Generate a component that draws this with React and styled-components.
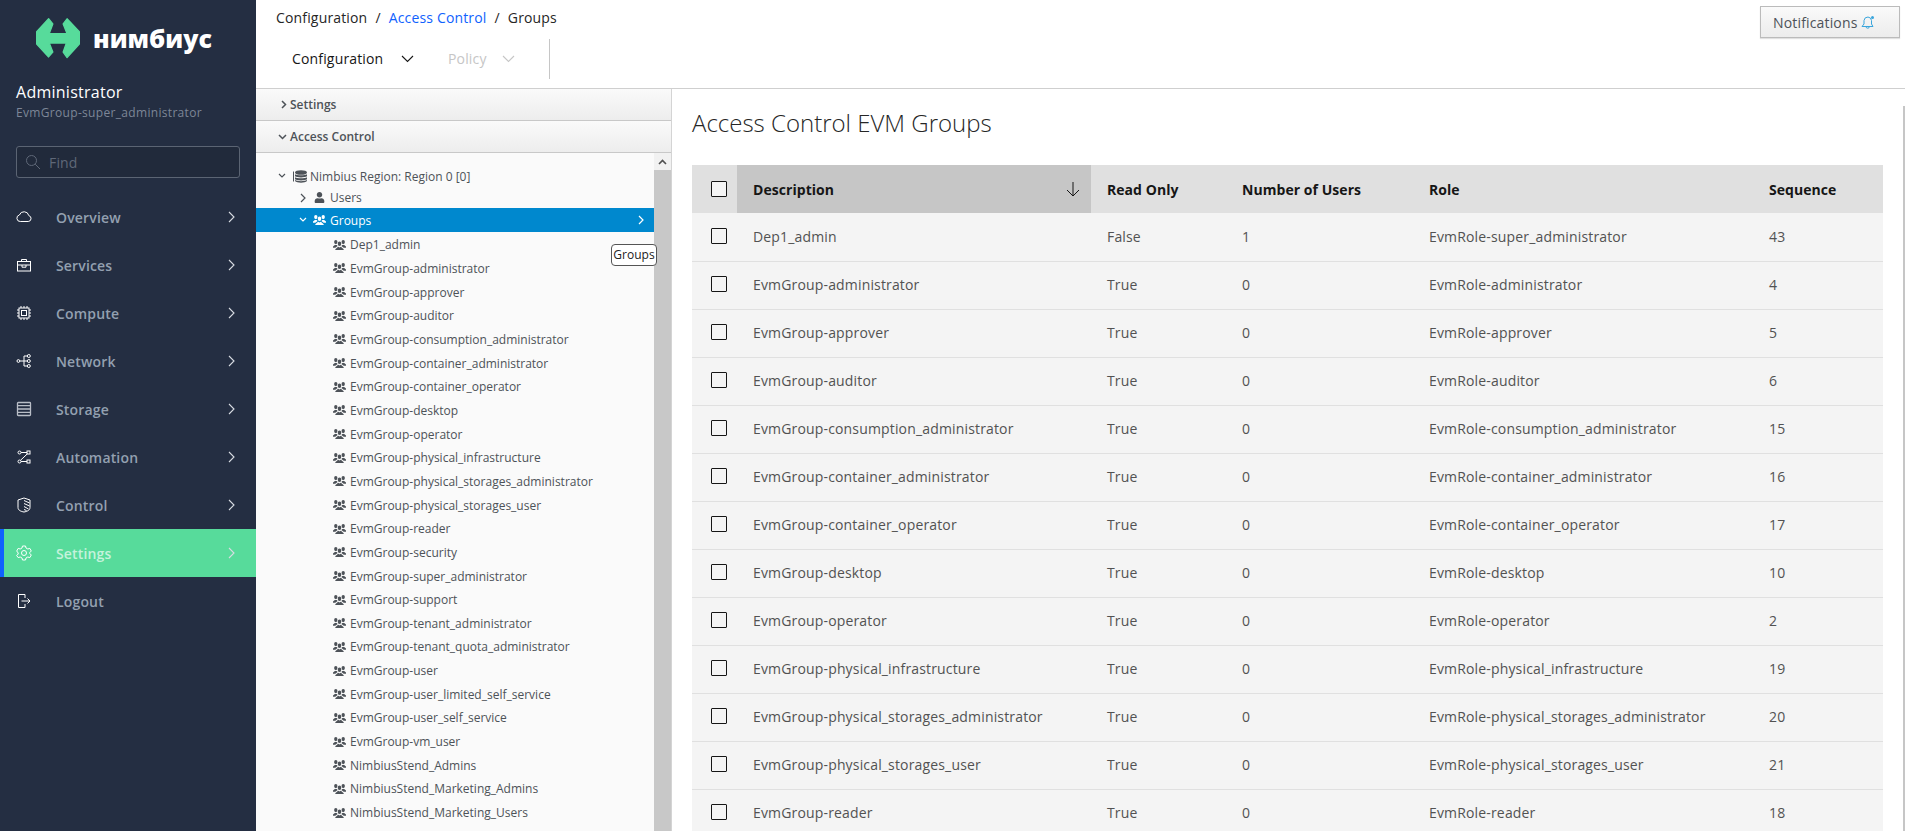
import React from 'react';
import styled, { createGlobalStyle } from 'styled-components';
import { FaUser } from 'react-icons/fa';

const Global = createGlobalStyle`
  html, body { margin: 0; padding: 0; height: 100%; overflow: hidden; background: #fff; }
  body { font-family: "Open Sans", "Noto Sans", sans-serif; color: #161616; }
  * { box-sizing: border-box; }
`;

const Page = styled.div`display: flex; height: 100vh; overflow: hidden;`;

const Sidebar = styled.aside`
  width: 256px; flex: none; background: #242e42; color: #fff; display: flex; flex-direction: column;
`;
const Brand = styled.div`
  height: 76px; padding: 18px 0 0 36px; display: flex; align-items: flex-start; gap: 13px;
`;
const BrandName = styled.span`
  font-size: 25px; font-weight: 800; line-height: 40px; color: #fff;
`;
const UserName = styled.div`
  margin: 5px 0 0 16px; font-size: 16px; line-height: 23px; color: #fff; letter-spacing: .26px;
`;
const UserRole = styled.div`
  margin: 0 0 0 16px; font-size: 12px; line-height: 18px; color: #7d8697; letter-spacing: .32px;
`;
const Search = styled.div`
  margin: 24px 16px 0; height: 32px; border: 1px solid #5b6473; border-radius: 3px; background: #212a3b;
  display: flex; align-items: center; padding-left: 8px; gap: 8px; color: #5f6878; font-size: 14px; letter-spacing: .16px;
`;
const Nav = styled.nav`margin-top: 15px; display: flex; flex-direction: column;`;
const NavItem = styled.div`
  height: 48px; display: flex; align-items: center;
  background: ${p => (p.$active ? '#57db9b' : 'transparent')};
  border-left: ${p => (p.$active ? '4px solid #0f62fe' : 'none')};
  padding-left: ${p => (p.$active ? '12px' : '16px')};
  color: ${p => (p.$active ? '#c5f2dc' : '#93a0b0')};
  font-size: 14px; font-weight: 600; letter-spacing: .16px;
`;
const NavIcon = styled.svg`width: 16px; height: 16px; flex: none; color: #fff; fill: none; stroke: currentColor; stroke-width: 1;`;
const NavLabel = styled.span`margin-left: 24px; flex: 1;`;
const NavArrow = styled.svg`width: 8px; height: 12px; margin-right: 20px; fill: none; stroke: #d8dce2; stroke-width: 1.1;`;

const Main = styled.div`flex: 1; min-width: 0; display: flex; flex-direction: column;`;
const Header = styled.header`
  height: 89px; flex: none; border-bottom: 1px solid #cfcfcf; display: flex; justify-content: space-between; padding: 0 5px 0 0;
`;
const HeaderLeft = styled.div`display: flex; flex-direction: column;`;
const Crumbs = styled.div`
  margin: 8px 0 0 20px; font-size: 14px; line-height: 20px; display: flex; gap: 8px; color: #262626; letter-spacing: .16px;
`;
const CrumbLink = styled.span`color: #0f62fe;`;
const Toolbar = styled.div`
  margin: 10px 0 0 36px; height: 41px; display: flex; align-items: center;
`;
const ToolButton = styled.div`
  display: flex; align-items: center; font-size: 14px; letter-spacing: .16px;
  color: ${p => (p.$disabled ? '#c6c6c6' : '#161616')};
  gap: ${p => (p.$disabled ? '15px' : '18px')};
  width: ${p => (p.$disabled ? '101px' : '156px')};
`;
const Chevron = styled.svg`width: 13px; height: 8px; fill: none; stroke: currentColor; stroke-width: 1.1;`;
const ToolDivider = styled.div`width: 1px; height: 40px; background: #c6c6c6;`;
const NotifyButton = styled.button`
  margin-top: 6px; width: 140px; height: 32px; border: 1px solid #bbb; background: linear-gradient(#fafafa, #ececec);
  font: 14px "Open Sans", sans-serif; letter-spacing: .16px; color: #4d5258; display: flex; align-items: center; gap: 2px; padding: 0 0 0 12px;
  box-shadow: 0 1px 1px rgba(0,0,0,.12);
`;

const Body = styled.div`flex: 1; min-height: 0; display: flex;`;
const TreePanel = styled.div`
  width: 416px; flex: none; border-right: 1px solid #d4d4d4; display: flex; flex-direction: column; background: #fafafa; overflow: hidden;
`;
const Accordion = styled.div`
  height: 32px; flex: none; display: flex; align-items: center; padding-left: ${p => (p.$open ? '22px' : '25px')}; gap: 3px;
  background: linear-gradient(#fafafa, #ededed); border-bottom: 1px solid #c8c8c8;
  font-size: 12px; font-weight: 600; color: #4d5258;
`;
const TreeWrap = styled.div`flex: 1; min-height: 0; display: flex;`;
const Tree = styled.div`flex: 1; padding-top: 12px; font-size: 12px; color: #4d5258;`;
const TreeRow = styled.div`
  height: ${p => p.$h || 23.67}px; display: flex; align-items: center; padding-left: ${p => p.$pad}px; white-space: nowrap;
  background: ${p => (p.$selected ? '#0088ce' : 'transparent')};
  color: ${p => (p.$selected ? '#fff' : '#4d5258')};
  svg { flex: none; }
`;
const GroupList = styled.div`padding-top: 1px;`;
const DownChevron = styled.svg`width: 8px; height: 6px; fill: none; stroke: currentColor; stroke-width: 1.2; margin-right: ${p => p.$gap}px;`;
const RightChevron = styled.svg`width: 6px; height: 10px; fill: none; stroke: currentColor; stroke-width: 1.2; margin-right: 8px;`;
const TreeLabel = styled.span`margin-left: ${p => p.$gap}px; flex: 1;`;
const SelArrow = styled.svg`width: 6px; height: 10px; fill: none; stroke: #fff; stroke-width: 1.2; margin-right: 10px;`;
const TreeScroll = styled.div`width: 17px; flex: none; background: #c8c8c8; display: flex; flex-direction: column;`;
const ScrollTop = styled.div`height: 17px; background: #f1f1f1; display: flex; align-items: center; justify-content: center;`;
const TipWrap = styled.div`position: relative;`;
const Tip = styled.div`
  position: absolute; left: 355px; top: 91px; height: 22px; width: 46px; border: 1px solid #555; border-radius: 4px; background: #fff;
  font-size: 12px; line-height: 20px; text-align: center; color: #222; z-index: 2;
`;

const Content = styled.main`flex: 1; min-width: 0; padding: 18px 22px 0 20px; position: relative; overflow: hidden;`;
const Title = styled.h1`margin: 0 0 26px; font-size: 24px; font-weight: 300; line-height: 32px; color: #262626;`;
const Table = styled.table`width: 1191px; border-collapse: collapse; table-layout: fixed; font-size: 14px; letter-spacing: .16px;`;
const HeadCell = styled.th`
  height: 48px; background: ${p => (p.$sorted ? '#c6c6c6' : '#e0e0e0')}; text-align: left; padding: 0 ${p => (p.$sorted ? '10px' : '16px')} 0 16px;
  font-weight: 700; color: #161616; white-space: nowrap; letter-spacing: .05px;
`;
const HeadInner = styled.div`display: flex; justify-content: space-between; align-items: center;`;
const CheckCell = styled.td`height: 48px; background: #f4f4f4; padding: 0 0 2px 19px; border-bottom: 1px solid #e0e0e0;`;
const CheckHead = styled.th`height: 48px; background: #e0e0e0; padding: 0 0 0 19px;`;
const CheckBox = styled.div`width: 16px; height: 16px; border: 1px solid #161616; border-radius: 1px; background: #f4f4f4;`;
const Cell = styled.td`
  height: 48px; background: #f4f4f4; padding: 0 16px 2px; border-bottom: 1px solid #e0e0e0; color: #525252; white-space: nowrap;
  tr:first-child > & { padding-bottom: 0; }
`;
const PageScroll = styled.div`position: absolute; right: 0; top: 17px; bottom: 0; width: 2px; background: #c6c6c6;`;

const arrow = <path d="M1 1l5 5-5 5" />;
const icons = {
  Overview: <path d="M4.300 12.500h7.900a3 3 0 0 0 .6-5.900A4.900 4.900 0 0 0 3.400 6 3.300 3.300 0 0 0 4.300 12.500z" />,
  Services: <><rect x="1.500" y="4.500" width="13" height="9.500" /><path d="M5.500 4.500V2.500h5v2M1.500 8h13M6 8v2.200h4V8" /></>,
  Compute: <><rect x="3" y="3" width="10" height="10" /><rect x="5.500" y="5.500" width="5" height="5" /><path d="M5 1v2M8 1v2M11 1v2M5 13v2M8 13v2M11 13v2M1 5h2M1 8h2M1 11h2M13 5h2M13 8h2M13 11h2" /></>,
  Network: <><circle cx="2.400" cy="8" r="1.400" /><circle cx="12.800" cy="3" r="1.500" /><circle cx="12.800" cy="8" r="1.500" /><circle cx="12.800" cy="13" r="1.500" /><path d="M4 8h7.300M8 3h3.300M8 13h3.300M8 3v10" /></>,
  Storage: <g stroke="#b9bec7" strokeWidth="1.300"><rect x="1.500" y="1.500" width="13" height="13" rx=".8" /><path d="M1.500 4.700h13M1.500 8h13M1.500 11.300h13" /></g>,
  Automation: <><circle cx="3.500" cy="3.500" r="1.500" /><rect x="11" y="2" width="3" height="3" /><circle cx="3.500" cy="12.500" r="1.500" /><rect x="11" y="11" width="3" height="3" /><path d="M5 3.500H11M5 12.500H11M4.500 11.300 11.500 4.700" /></>,
  Control: <><path d="M8 1 14 3v7.500c0 2.800-3 4-6 4.500-3-.5-6-1.700-6-4.500V3z" /><path d="M8 3.500 13.500 6M8 6.500l5.500 2.500M8 9.500l4.500 2.500M8 12.500l2.500 1" /></>,
  Settings: <><circle cx="8" cy="8" r="2.500" /><path d="M6.500 1h3l.5 2 1.800 1 2-.6 1.500 2.600-1.500 1.500v1l1.500 1.500-1.500 2.600-2-.6-1.800 1-.5 2h-3l-.5-2-1.800-1-2 .6L.7 10.500 2.200 9V8L.7 6 2.200 3.400l2 .6 1.800-1z" /></>,
  Logout: <><path d="M9 5V1.500H2.500v13H9V11" /><path d="M5.500 8h8.500M11.500 5.500 14 8l-2.500 2.500" /></>,
};
const navItems = ['Overview', 'Services', 'Compute', 'Network', 'Storage', 'Automation', 'Control', 'Settings', 'Logout'];

const Logo = () => (
  <svg width="44" height="41" viewBox="16 20 136 126" style={{ flex: 'none' }}>
    <path fill="#57db9b" stroke="#57db9b" strokeWidth="4" strokeLinejoin="round"
      d="M55 22 68 38 57 68H112L100 38 112 22 150 62V100L112 142 100 125 110 97H57L68 125 55 140 18 100V62z" />
  </svg>
);

const GroupIcon = () => (
  <svg width="13" height="12" viewBox="0 0 14 12" fill="currentColor">
    <ellipse cx="3" cy="2.800" rx="1.800" ry="2.300" />
    <ellipse cx="11" cy="2.800" rx="1.800" ry="2.300" />
    <path d="M0 9V7.600L2 6h2l1 1.200L2.500 9zM14 9V7.600L12 6h-2L9 7.200 11.500 9z" />
    <ellipse cx="7" cy="4.600" rx="1.900" ry="2.500" />
    <path d="M2.500 11.500v-1L5.500 8 7 8.800 8.500 8l3 2.500v1z" />
  </svg>
);

const groups = ['Dep1_admin','EvmGroup-administrator','EvmGroup-approver','EvmGroup-auditor','EvmGroup-consumption_administrator','EvmGroup-container_administrator','EvmGroup-container_operator','EvmGroup-desktop','EvmGroup-operator','EvmGroup-physical_infrastructure','EvmGroup-physical_storages_administrator','EvmGroup-physical_storages_user','EvmGroup-reader','EvmGroup-security','EvmGroup-super_administrator','EvmGroup-support','EvmGroup-tenant_administrator','EvmGroup-tenant_quota_administrator','EvmGroup-user','EvmGroup-user_limited_self_service','EvmGroup-user_self_service','EvmGroup-vm_user','NimbiusStend_Admins','NimbiusStend_Marketing_Admins','NimbiusStend_Marketing_Users'];

const rows = [
  ['Dep1_admin','False','1','EvmRole-super_administrator','43'],
  ['EvmGroup-administrator','True','0','EvmRole-administrator','4'],
  ['EvmGroup-approver','True','0','EvmRole-approver','5'],
  ['EvmGroup-auditor','True','0','EvmRole-auditor','6'],
  ['EvmGroup-consumption_administrator','True','0','EvmRole-consumption_administrator','15'],
  ['EvmGroup-container_administrator','True','0','EvmRole-container_administrator','16'],
  ['EvmGroup-container_operator','True','0','EvmRole-container_operator','17'],
  ['EvmGroup-desktop','True','0','EvmRole-desktop','10'],
  ['EvmGroup-operator','True','0','EvmRole-operator','2'],
  ['EvmGroup-physical_infrastructure','True','0','EvmRole-physical_infrastructure','19'],
  ['EvmGroup-physical_storages_administrator','True','0','EvmRole-physical_storages_administrator','20'],
  ['EvmGroup-physical_storages_user','True','0','EvmRole-physical_storages_user','21'],
  ['EvmGroup-reader','True','0','EvmRole-reader','18'],
];

export default function App() {
  return (
    <Page>
      <Global />
      <Sidebar>
        <Brand><Logo /><BrandName>нимбиус</BrandName></Brand>
        <UserName>Administrator</UserName>
        <UserRole>EvmGroup-super_administrator</UserRole>
        <Search>
          <svg width="16" height="16" viewBox="0 0 16 16" fill="none" stroke="#5f6878"><circle cx="6.500" cy="6.500" r="5" /><path d="M10.200 10.200 15 15" /></svg>
          Find
        </Search>
        <Nav>
          {navItems.map(n => (
            <NavItem key={n} $active={n === 'Settings'}>
              <NavIcon viewBox="0 0 16 16">{icons[n]}</NavIcon>
              <NavLabel>{n}</NavLabel>
              {n !== 'Logout' && <NavArrow viewBox="0 0 8 12">{arrow}</NavArrow>}
            </NavItem>
          ))}
        </Nav>
      </Sidebar>
      <Main>
        <Header>
          <HeaderLeft>
            <Crumbs><span>Configuration</span><span>/</span><CrumbLink>Access Control</CrumbLink><span>/</span><span>Groups</span></Crumbs>
            <Toolbar>
              <ToolButton>Configuration<Chevron viewBox="0 0 13 8"><path d="M1 1l5.500 5.500L12 1" /></Chevron></ToolButton>
              <ToolButton $disabled>Policy<Chevron viewBox="0 0 13 8"><path d="M1 1l5.500 5.500L12 1" /></Chevron></ToolButton>
              <ToolDivider />
            </Toolbar>
          </HeaderLeft>
          <NotifyButton>Notifications
            <svg width="16" height="16" viewBox="0 0 16 16" fill="none" stroke="#39a5dc"><path d="M2 12.500h11L11.500 10V6.500A4 4 0 0 0 8 3a4 4 0 0 0-4 3.500V10zM6 12.500a1.700 1.700 0 0 0 3.400 0" /><circle cx="12.500" cy="3.500" r="1.500" fill="#39a5dc" stroke="none" /></svg>
          </NotifyButton>
        </Header>
        <Body>
          <TreePanel>
            <Accordion><svg width="6" height="9" viewBox="0 0 6 9" fill="none" stroke="#4d5258" strokeWidth="1.500"><path d="M1 1l3.500 3.500L1 8" /></svg>Settings</Accordion>
            <Accordion $open><svg width="9" height="6" viewBox="0 0 9 6" fill="none" stroke="#4d5258" strokeWidth="1.500"><path d="M1 1l3.500 3.500L8 1" /></svg>Access Control</Accordion>
            <TreeWrap>
              <TipWrap><Tip>Groups</Tip></TipWrap>
              <Tree>
                <TreeRow $pad={22} $h={22}>
                  <DownChevron viewBox="0 0 8 6" $gap={7}><path d="M1 1l3 3 3-3" /></DownChevron>
                  <svg width="14" height="13" viewBox="0 0 14 13" fill="#4d5258"><rect x="0" y="1.500" width="1" height="10" /><ellipse cx="8" cy="2.500" rx="6" ry="2.300" /><path d="M2 4.200c2 1.500 10 1.500 12 0v2.100c-2 1.500-10 1.500-12 0zM2 7.200c2 1.500 10 1.500 12 0v2.100c-2 1.500-10 1.500-12 0zM2 10c2 1.500 10 1.500 12 0v1c-2 2.200-10 2.200-12 0z" /></svg>
                  <TreeLabel $gap={3}>Nimbius Region: Region 0 [0]</TreeLabel>
                </TreeRow>
                <TreeRow $pad={44} $h={21}>
                  <RightChevron viewBox="0 0 6 10"><path d="M1 1l4 4-4 4" /></RightChevron>
                  <FaUser size={11} />
                  <TreeLabel $gap={5}>Users</TreeLabel>
                </TreeRow>
                <TreeRow $pad={43} $selected $h={24}>
                  <DownChevron viewBox="0 0 8 6" $gap={6}><path d="M1 1l3 3 3-3" /></DownChevron>
                  <GroupIcon />
                  <TreeLabel $gap={4}>Groups</TreeLabel>
                  <SelArrow viewBox="0 0 6 10"><path d="M1 1l4 4-4 4" /></SelArrow>
                </TreeRow>
                <GroupList>
                  {groups.map(g => (
                    <TreeRow key={g} $pad={77}><GroupIcon /><TreeLabel $gap={4}>{g}</TreeLabel></TreeRow>
                  ))}
                </GroupList>
              </Tree>
              <TreeScroll>
                <ScrollTop><svg width="9" height="6" viewBox="0 0 9 6" fill="none" stroke="#505050" strokeWidth="1.600"><path d="M1 5l3.500-3.500L8 5" /></svg></ScrollTop>
              </TreeScroll>
            </TreeWrap>
          </TreePanel>
          <Content>
            <Title>Access Control EVM Groups</Title>
            <Table>
              <colgroup>
                <col style={{ width: 45 }} /><col style={{ width: 354 }} /><col style={{ width: 135 }} /><col style={{ width: 187 }} /><col style={{ width: 340 }} /><col style={{ width: 130 }} />
              </colgroup>
              <thead>
                <tr>
                  <CheckHead><CheckBox /></CheckHead>
                  <HeadCell $sorted><HeadInner>Description
                    <svg width="16" height="16" viewBox="0 0 16 16" fill="none" stroke="#161616"><path d="M8 1v14M2 9l6 6 6-6" /></svg>
                  </HeadInner></HeadCell>
                  <HeadCell>Read Only</HeadCell>
                  <HeadCell>Number of Users</HeadCell>
                  <HeadCell>Role</HeadCell>
                  <HeadCell>Sequence</HeadCell>
                </tr>
              </thead>
              <tbody>
                {rows.map(r => (
                  <tr key={r[0]}>
                    <CheckCell><CheckBox /></CheckCell>
                    {r.map((c, i) => <Cell key={i}>{c}</Cell>)}
                  </tr>
                ))}
              </tbody>
            </Table>
            <PageScroll />
          </Content>
        </Body>
      </Main>
    </Page>
  );
}
